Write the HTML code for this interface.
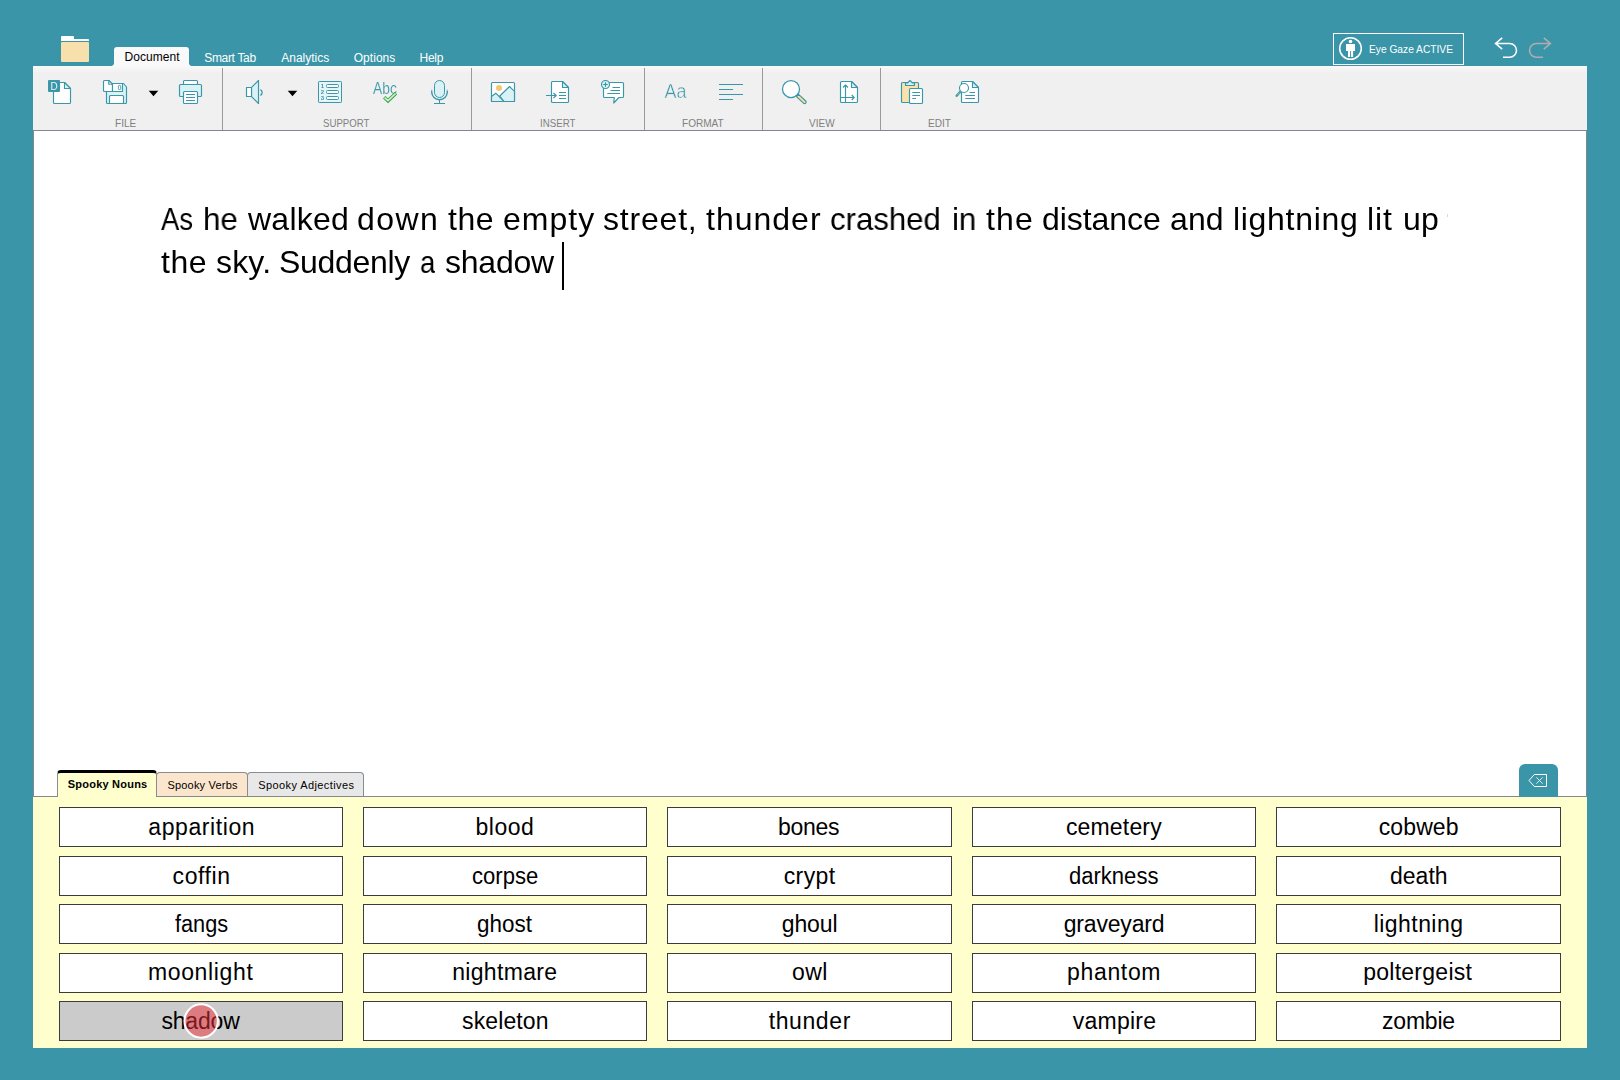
<!DOCTYPE html>
<html lang="en"><head><meta charset="utf-8"><title>DocsPlus - Spooky story</title>
<style>
*{box-sizing:border-box;margin:0;padding:0}
html,body{width:1620px;height:1080px;overflow:hidden;background:#3995a7;font-family:"Liberation Sans",sans-serif;}
.app{position:relative;width:1620px;height:1080px;background:#3995a7;}
.t{position:absolute;white-space:pre;transform-origin:0 0;}
.abs{position:absolute;}
.line .t{will-change:transform;}
.ribbon{position:absolute;left:33px;top:66px;width:1554px;height:64px;background:linear-gradient(#f9f9f9 0,#f0f0f0 7px,#f0f0f0 100%);}
.sep{position:absolute;top:68px;width:1px;height:62px;background:#9a9a9a;}
.doctab{position:absolute;left:114px;top:47px;width:75px;height:20px;background:linear-gradient(#fafafa,#f9f9f9);border-radius:3px 3px 0 0;}
.doctab:before,.doctab:after{content:"";position:absolute;bottom:1px;width:3px;height:3px;}
.doctab:before{left:-3px;background:radial-gradient(circle at 0 0,transparent 2.5px,#f9f9f9 3.5px);}
.doctab:after{right:-3px;background:radial-gradient(circle at 100% 0,transparent 2.5px,#f9f9f9 3.5px);}
.doc{position:absolute;left:33px;top:130px;width:1554px;height:667px;background:#fff;border:1px solid #828790;border-bottom:none;}
.caret{position:absolute;left:562px;top:242px;width:2px;height:48px;background:#000;}
.bank{position:absolute;left:33px;top:797px;width:1554px;height:251px;background:#ffffce;}
.bline{position:absolute;left:33px;top:796px;width:1554px;height:1px;background:#828790;}
.btab{position:absolute;border:1px solid #898c95;border-bottom:none;border-radius:4px 4px 0 0;}
.btab.a{left:57px;top:770px;width:100px;height:27px;background:#ffffce;border-top:3px solid #000;}
.btab.b{left:156px;top:772px;width:92px;height:24px;background:#fbe5cd;}
.btab.c{left:247px;top:772px;width:117px;height:24px;background:#e8e8e8;}
.wb{position:absolute;background:#fff;border:1px solid #3c3c3c;}
.wb.sel{background:#cbcbcb;}
.gaze{position:absolute;left:183.6px;top:1003.1px;width:35.2px;height:35.2px;border-radius:50%;background:rgba(238,45,55,.5);border:2px solid #fff;}
.bksp{position:absolute;left:1519px;top:764px;width:39px;height:33px;background:#3995a7;border-radius:6px 6px 0 0;}
.egbox{position:absolute;left:1333px;top:33px;width:131px;height:32px;border:1px solid #fff;}
</style></head>
<body><div class="app">
<div class="header">
<svg class="abs" style="left:0;top:0px;" width="1620" height="66" viewBox="0 0 1620 66" >
<g>
<path d="M61,37 a1,1 0 0 1 1,-1 h11 a1,1 0 0 1 1,1 v2 h14 a1,1 0 0 1 1,1 v1 h-28z" fill="#fff"/>
<path d="M61,43 a1,1 0 0 1 1,-1 h26 a1,1 0 0 1 1,1 v18 a1,1 0 0 1 -1,1 h-26 a1,1 0 0 1 -1,-1z" fill="#f8e0ad"/>
</g>
</svg>
<div class="doctab"></div>
<span class="t" style="left:124.4px;top:50.6px;font-size:12px;line-height:12px;letter-spacing:0.086px;color:#000;">Document</span>
<span class="t" style="left:204.2px;top:51.7px;font-size:12px;line-height:12px;letter-spacing:-0.312px;color:#fff;">Smart Tab</span>
<span class="t" style="left:281.3px;top:51.7px;font-size:12px;line-height:12px;letter-spacing:-0.013px;color:#fff;">Analytics</span>
<span class="t" style="left:353.7px;top:51.7px;font-size:12px;line-height:12px;letter-spacing:0.05px;color:#fff;">Options</span>
<span class="t" style="left:419.5px;top:51.7px;font-size:12px;line-height:12px;letter-spacing:-0.233px;color:#fff;">Help</span>
<div class="egbox"></div>
<svg class="abs" style="left:0;top:0px;" width="1620" height="66" viewBox="0 0 1620 66" >
<g fill="#fff">
<circle cx="1350.5" cy="48.5" r="10.8" fill="none" stroke="#fff" stroke-width="1.5"/>
<circle cx="1350.5" cy="41.5" r="1.8"/>
<rect x="1346" y="44" width="9" height="7"/>
<rect x="1348" y="50" width="2.1" height="7"/>
<rect x="1351" y="50" width="2.1" height="7"/>
</g>
</svg>
<span class="t" style="left:1369.4px;top:44.1px;font-size:11.5px;line-height:11.5px;color:#fff;transform:scaleX(0.8874);">Eye Gaze ACTIVE</span>
<svg class="abs" style="left:0;top:0px;" width="1620" height="66" viewBox="0 0 1620 66" >
<g fill="none" stroke-width="1.6" stroke-linejoin="miter">
<path d="M1502.2,37.8 L1495.6,43.5 L1502.2,49.2 M1495.8,43.5 H1509.6 A6.9,6.9 0 0 1 1509.6,57.3 H1503" stroke="#fff"/>
<path d="M1543.8,37.8 L1550.4,43.5 L1543.8,49.2 M1550.2,43.5 H1536.4 A6.9,6.9 0 0 0 1536.4,57.3 H1543" stroke="#b1adad"/>
</g>
</svg>
</div>
<div class="ribbon"></div>
<div class="sep" style="left:222px"></div>
<div class="sep" style="left:471px"></div>
<div class="sep" style="left:644px"></div>
<div class="sep" style="left:762px"></div>
<div class="sep" style="left:880px"></div>
<span class="t" style="left:115.3px;top:117.8px;font-size:11px;line-height:11px;color:#808080;transform:scaleX(0.9174);">FILE</span>
<span class="t" style="left:323.3px;top:117.8px;font-size:11px;line-height:11px;color:#808080;transform:scaleX(0.8755);">SUPPORT</span>
<span class="t" style="left:539.7px;top:117.8px;font-size:11px;line-height:11px;color:#808080;transform:scaleX(0.8825);">INSERT</span>
<span class="t" style="left:682.3px;top:117.8px;font-size:11px;line-height:11px;color:#808080;transform:scaleX(0.913);">FORMAT</span>
<span class="t" style="left:808.7px;top:117.8px;font-size:11px;line-height:11px;color:#808080;transform:scaleX(0.9107);">VIEW</span>
<span class="t" style="left:928.3px;top:117.8px;font-size:11px;line-height:11px;color:#808080;transform:scaleX(0.92);">EDIT</span>
<svg class="abs" style="left:370px;top:78px;will-change:transform" width="30" height="20" viewBox="370 78 30 20"><text x="373" y="94" font-family="Liberation Sans,sans-serif" font-size="16" fill="#3a97a9" stroke="#f0f0f0" stroke-width="0.12" textLength="23.8" lengthAdjust="spacingAndGlyphs">Abc</text></svg>
<svg class="abs" style="left:662px;top:80px;will-change:transform" width="28" height="22" viewBox="662 80 28 22"><text x="664.600" y="98" font-family="Liberation Sans,sans-serif" font-size="19.5" fill="#3a97a9" stroke="#f0f0f0" stroke-width="0.45" textLength="22" lengthAdjust="spacingAndGlyphs">Aa</text></svg>
<svg class="abs" style="left:0;top:0px;" width="1620" height="140" viewBox="0 0 1620 140" >
<g fill="#fff" stroke="#3a97a9" stroke-width="1.15" stroke-linejoin="round">
<path d="M54.5,82.5 H64.5 L70.5,88.5 V102.5 a1,1 0 0 1 -1,1 H54.5 a1,1 0 0 1 -1,-1 V83.5 a1,1 0 0 1 1,-1z" fill="#fff"/><path d="M64.5,82.5 V88.5 H70.5z" fill="#daf1f5"/>
<rect x="48" y="80" width="12" height="12" rx="1" fill="#3a97a9" stroke="none"/>
<text x="50.6" y="90" font-family="Liberation Sans,sans-serif" font-size="10" fill="#eaf6f8" stroke="none" textLength="7.2" lengthAdjust="spacingAndGlyphs">D</text>
</g>
<g fill="#fff" stroke="#3a97a9" stroke-width="1.15" stroke-linejoin="round">
<path d="M106.5,91 V102.5 a1,1 0 0 0 1,1 H125.500 a1,1 0 0 0 1,-1 V87 L123.500,83.5 H112" fill="#daf1f5"/>
<path d="M104.500,80.500 H109 L112.500,84 V91.500 H104.500 a1,1 0 0 1 -1,-1 V81.500 a1,1 0 0 1 1,-1z"/>
<path d="M108.800,80.500 V84.200 H112.500" fill="none"/>
<rect x="112.500" y="83.500" width="10" height="8"/>
<rect x="118.400" y="85.400" width="2.300" height="4.200" rx="0.8" stroke-width="0.9"/>
<path d="M109.500,103.500 V96.500 a1,1 0 0 1 1,-1 H122.500 a1,1 0 0 1 1,1 V103.500z"/>
</g>
<path d="M148.700,90.800 H158.300 L153.500,96.200z" fill="#000"/>
<g fill="#fff" stroke="#3a97a9" stroke-width="1.15" stroke-linejoin="round">
<rect x="179.500" y="84.500" width="22" height="12" rx="1" fill="#daf1f5"/>
<rect x="183.500" y="80.500" width="14" height="4" rx="1"/>
<rect x="183.500" y="91.500" width="14" height="12" rx="1"/>
<path d="M186,94.500 H195 M186,97.500 H195 M186,100.500 H195" fill="none"/>
</g>
<g fill="#fff" stroke="#3a97a9" stroke-width="1.15" stroke-linejoin="round">
<path d="M251.500,87.300 L258.500,80.500 V103.500 L251.500,96.700z" fill="#daf1f5"/>
<rect x="246.500" y="87.500" width="5" height="9"/>
<path d="M260.400,89.600 A3.300,3.300 0 0 1 260.400,95.400" fill="none" stroke-width="1.3"/>
</g>
<path d="M287.700,90.800 H297.300 L292.500,96.200z" fill="#000"/>
<g fill="#fff" stroke="#3a97a9" stroke-width="1">
<rect x="318.500" y="81.500" width="23" height="21" rx="0.7" fill="#e6f6f8"/>
<rect x="326.500" y="84.500" width="12" height="3" rx="1"/>
<rect x="326.500" y="90.500" width="12" height="3" rx="1"/>
<rect x="326.500" y="96.500" width="12" height="3" rx="1"/>
<g font-family="Liberation Sans,sans-serif" font-size="6" font-weight="700" fill="#3a97a9" stroke="none"><text x="320.700" y="88">1</text><text x="320.700" y="94">2</text><text x="320.700" y="100">3</text></g>
</g>
<g>
<path d="M384.200,97.300 L388,100.800 L396,93.200" fill="none" stroke="#31a23a" stroke-width="3.400" stroke-linejoin="miter"/>
<path d="M384.600,97.600 L388,100.700 L395.600,93.500" fill="none" stroke="#d2f2d4" stroke-width="1.700" stroke-linejoin="miter"/>
</g>
<g fill="none" stroke="#3a97a9" stroke-width="1">
<rect x="434.500" y="80.500" width="10" height="17" rx="5" fill="#daf1f5"/>
<path d="M431.700,91 V92 A7.800,7.800 0 0 0 447.300,92 V91" stroke-width="1.4"/><path d="M431.700,89.500 V91 M447.300,89.500 V91" stroke-width="1.4" stroke-opacity="0.45"/>
<path d="M439.500,100 V103.500 M434,103.500 H445"/>
</g>
<g fill="#fff" stroke="#3a97a9" stroke-width="1.15" stroke-linejoin="round">
<rect x="491.500" y="82.500" width="23" height="19" rx="1"/>
<path d="M499.800,96 L509.500,86.500 L514.500,91.300 V101.500 H504z" fill="#daf1f5"/>
<path d="M491.500,96.500 L495.800,93.200 L504,101.500 H491.500z" fill="#daf1f5"/>
<circle cx="499" cy="88" r="3" fill="#f0c872" stroke="none"/>
</g>
<g fill="#fff" stroke="#3a97a9" stroke-width="1.15" stroke-linejoin="round">
<path d="M552.5,81.5 H562.5 L568.5,87.5 V101.5 a1,1 0 0 1 -1,1 H552.5 a1,1 0 0 1 -1,-1 V82.5 a1,1 0 0 1 1,-1z" fill="#fff"/><path d="M562.5,81.5 V87.5 H568.5z" fill="#daf1f5"/>
<path d="M559,92.500 H566 M559,95.500 H566 M559,98.500 H566 M546,95.500 H556 M553.500,93 L556.200,95.500 L553.500,98" fill="none"/>
</g>
<g fill="#fff" stroke="#3a97a9" stroke-width="1.15" stroke-linejoin="round">
<path d="M604.500,82.500 H622.500 a1,1 0 0 1 1,1 V96.500 a1,1 0 0 1 -1,1 H619 L613.700,103 L614.300,97.500 H604.500 a1,1 0 0 1 -1,-1 V83.500 a1,1 0 0 1 1,-1z"/>
<path d="M612.500,87.500 H620 M610.500,90.500 H620 M607.300,93.500 H620" fill="none"/>
<circle cx="605.500" cy="84.500" r="4" fill="#daf1f5"/>
<path d="M603.200,84.500 H607.800 M605.500,82.200 V86.800" fill="none"/>
</g>
<path d="M719,84.500 H743 M719,89.500 H733 M719,94.500 H743 M719,99.500 H733" fill="none" stroke="#3a97a9" stroke-width="1"/>
<g stroke="#3a97a9" stroke-width="1.15" stroke-linejoin="round">
<path d="M796.400,96.600 L798.600,94.400 L805.700,101 a1.500,1.500 0 0 1 -2.200,2.200z" fill="#fce08c"/>
<circle cx="791" cy="89" r="8.500" fill="#fff" stroke-width="1.25"/>
</g>
<g fill="#fff" stroke="#3a97a9" stroke-width="1.15" stroke-linejoin="round">
<path d="M841.5,81.5 H851.5 L857.5,87.5 V101.5 a1,1 0 0 1 -1,1 H841.5 a1,1 0 0 1 -1,-1 V82.5 a1,1 0 0 1 1,-1z" fill="#fff"/><path d="M851.5,81.5 V87.5 H857.5z" fill="#daf1f5"/>
<path d="M845.500,103 V85 M843,87.500 L845.500,85 L848,87.500 M840.500,97.500 H854 M851.700,95 L854.200,97.500 L851.700,100" fill="none"/>
</g>
<g fill="#fff" stroke="#3a97a9" stroke-width="1.15" stroke-linejoin="round">
<rect x="901.500" y="82.500" width="17" height="20" rx="1" fill="#fbe2ad"/>
<path d="M905.500,85.500 V83 H907.500 L910,80.500 L912.500,83 H914.500 V85.500z" fill="#daf1f5"/>
<rect x="909.500" y="88.500" width="13" height="15" rx="1"/>
<path d="M912.300,92.500 H920 M912.300,95.500 H920 M912.300,98.500 H916" fill="none"/>
</g>
<g fill="#fff" stroke="#3a97a9" stroke-width="1.15" stroke-linejoin="round">
<path d="M962.5,81.5 H972.5 L978.5,87.5 V101.5 a1,1 0 0 1 -1,1 H962.5 a1,1 0 0 1 -1,-1 V82.5 a1,1 0 0 1 1,-1z" fill="#fff"/><path d="M972.5,81.5 V87.5 H978.5z" fill="#daf1f5"/>
<path d="M969.500,92.500 H975 M965.300,95.500 H975 M965.300,98.500 H975" fill="none"/>
<path d="M960.700,91.300 L956.700,95.800" stroke-width="2.400" stroke-linecap="round"/>
<path d="M960.400,91.700 L957,95.500" stroke="#f2dc8a" stroke-width="0.900" stroke-dasharray="1 0.800"/>
<circle cx="964" cy="88" r="4.500"/>
</g>
</svg>
<div class="doc"></div>
<p class="line"><span class="t" style="left:160.74px;top:203px;font-size:32px;line-height:32px;color:#000;transform:scaleX(0.86);">As</span> <span class="t" style="left:202.72px;top:203px;font-size:32px;line-height:32px;color:#000;transform:scaleX(0.9794);">he</span> <span class="t" style="left:248.3px;top:203px;font-size:32px;line-height:32px;letter-spacing:0.24px;color:#000;">walked</span> <span class="t" style="left:357.3px;top:203px;font-size:32px;line-height:32px;letter-spacing:1.467px;color:#000;">down</span> <span class="t" style="left:448px;top:203px;font-size:32px;line-height:32px;letter-spacing:0.5px;color:#000;">the</span> <span class="t" style="left:503.2px;top:203px;font-size:32px;line-height:32px;letter-spacing:1.0px;color:#000;">empty</span> <span class="t" style="left:603.2px;top:203px;font-size:32px;line-height:32px;letter-spacing:0.8px;color:#000;">street,</span> <span class="t" style="left:705.8px;top:203px;font-size:32px;line-height:32px;letter-spacing:1.0px;color:#000;">thunder</span> <span class="t" style="left:830.33px;top:203px;font-size:32px;line-height:32px;color:#000;transform:scaleX(0.9732);">crashed</span> <span class="t" style="left:951.82px;top:203px;font-size:32px;line-height:32px;color:#000;transform:scaleX(0.9783);">in</span> <span class="t" style="left:985.5px;top:203px;font-size:32px;line-height:32px;letter-spacing:1.1px;color:#000;">the</span> <span class="t" style="left:1042.3px;top:203px;font-size:32px;line-height:32px;letter-spacing:-0.071px;color:#000;">distance</span> <span class="t" style="left:1170.3px;top:203px;font-size:32px;line-height:32px;letter-spacing:0.1px;color:#000;">and</span> <span class="t" style="left:1233.2px;top:203px;font-size:32px;line-height:32px;letter-spacing:0.688px;color:#000;">lightning</span> <span class="t" style="left:1367.3px;top:203px;font-size:32px;line-height:32px;letter-spacing:0.85px;color:#000;">lit</span> <span class="t" style="left:1403.2px;top:203px;font-size:32px;line-height:32px;letter-spacing:0.1px;color:#000;">up</span></p>
<p class="line"><span class="t" style="left:160.8px;top:246px;font-size:32px;line-height:32px;letter-spacing:0.5px;color:#000;">the</span> <span class="t" style="left:216.2px;top:246px;font-size:32px;line-height:32px;letter-spacing:0.167px;color:#000;">sky.</span> <span class="t" style="left:279px;top:246px;font-size:32px;line-height:32px;letter-spacing:-0.314px;color:#000;">Suddenly</span> <span class="t" style="left:419.83px;top:246px;font-size:32px;line-height:32px;color:#000;transform:scaleX(0.86);">a</span> <span class="t" style="left:444.8px;top:246px;font-size:32px;line-height:32px;letter-spacing:-0.22px;color:#000;">shadow</span></p>
<div class="caret"></div>
<div class="abs" style="left:1447px;top:214px;width:1px;height:3px;background:#d8d8d8"></div>
<div class="bline"></div>
<div class="bank"></div>
<div class="btab b"></div><div class="btab c"></div><div class="btab a"></div>
<span class="t" style="left:67.8px;top:778.8px;font-size:11px;line-height:11px;letter-spacing:0.218px;color:#000;font-weight:700;">Spooky Nouns</span>
<span class="t" style="left:167.4px;top:780.1px;font-size:11px;line-height:11px;letter-spacing:0.2px;color:#000;">Spooky Verbs</span>
<span class="t" style="left:258.2px;top:780.1px;font-size:11px;line-height:11px;letter-spacing:0.406px;color:#000;">Spooky Adjectives</span>
<div class="bksp"></div>
<svg class="abs" style="left:0;top:760px;" width="1620" height="40" viewBox="0 760 1620 40" >
<g fill="none" stroke="#fff">
<path d="M1534.3,774.5 H1546.5 V786.5 H1534.3 L1529,780.5 Z" stroke-width="1" stroke-linejoin="round"/>
<path d="M1536.3,777.3 L1542.7,783.7 M1542.7,777.3 L1536.3,783.7" stroke-width="0.8"/>
</g>
</svg>
<div class="wb" style="left:59px;top:807px;width:284px;height:40px"></div><span class="t" style="left:148.35px;top:816px;font-size:23px;line-height:23px;letter-spacing:0.589px;color:#000;">apparition</span>
<div class="wb" style="left:363px;top:807px;width:284px;height:40px"></div><span class="t" style="left:475.45px;top:816px;font-size:23px;line-height:23px;letter-spacing:0.525px;color:#000;">blood</span>
<div class="wb" style="left:667px;top:807px;width:285px;height:40px"></div><span class="t" style="left:778.05px;top:816px;font-size:23px;line-height:23px;letter-spacing:-0.275px;color:#000;">bones</span>
<div class="wb" style="left:972px;top:807px;width:284px;height:40px"></div><span class="t" style="left:1065.9px;top:816px;font-size:23px;line-height:23px;letter-spacing:0.171px;color:#000;">cemetery</span>
<div class="wb" style="left:1276px;top:807px;width:285px;height:40px"></div><span class="t" style="left:1378.7px;top:816px;font-size:23px;line-height:23px;letter-spacing:0.12px;color:#000;">cobweb</span>
<div class="wb" style="left:59px;top:856px;width:284px;height:40px"></div><span class="t" style="left:172.55px;top:865px;font-size:23px;line-height:23px;letter-spacing:0.58px;color:#000;">coffin</span>
<div class="wb" style="left:363px;top:856px;width:284px;height:40px"></div><span class="t" style="left:471.9px;top:865px;font-size:23px;line-height:23px;color:#000;transform:scaleX(0.9594);">corpse</span>
<div class="wb" style="left:667px;top:856px;width:285px;height:40px"></div><span class="t" style="left:783.7px;top:865px;font-size:23px;line-height:23px;letter-spacing:0.4px;color:#000;">crypt</span>
<div class="wb" style="left:972px;top:856px;width:284px;height:40px"></div><span class="t" style="left:1069.45px;top:865px;font-size:23px;line-height:23px;color:#000;transform:scaleX(0.9581);">darkness</span>
<div class="wb" style="left:1276px;top:856px;width:285px;height:40px"></div><span class="t" style="left:1389.95px;top:865px;font-size:23px;line-height:23px;letter-spacing:0.025px;color:#000;">death</span>
<div class="wb" style="left:59px;top:904px;width:284px;height:40px"></div><span class="t" style="left:174.55px;top:913px;font-size:23px;line-height:23px;color:#000;transform:scaleX(0.9446);">fangs</span>
<div class="wb" style="left:363px;top:904px;width:284px;height:40px"></div><span class="t" style="left:477.2px;top:913px;font-size:23px;line-height:23px;color:#000;transform:scaleX(0.9754);">ghost</span>
<div class="wb" style="left:667px;top:904px;width:285px;height:40px"></div><span class="t" style="left:781.7px;top:913px;font-size:23px;line-height:23px;letter-spacing:-0.1px;color:#000;">ghoul</span>
<div class="wb" style="left:972px;top:904px;width:284px;height:40px"></div><span class="t" style="left:1063.65px;top:913px;font-size:23px;line-height:23px;letter-spacing:-0.163px;color:#000;">graveyard</span>
<div class="wb" style="left:1276px;top:904px;width:285px;height:40px"></div><span class="t" style="left:1373.7px;top:913px;font-size:23px;line-height:23px;letter-spacing:0.45px;color:#000;">lightning</span>
<div class="wb" style="left:59px;top:953px;width:284px;height:40px"></div><span class="t" style="left:147.9px;top:961px;font-size:23px;line-height:23px;letter-spacing:0.65px;color:#000;">moonlight</span>
<div class="wb" style="left:363px;top:953px;width:284px;height:40px"></div><span class="t" style="left:452.2px;top:961px;font-size:23px;line-height:23px;letter-spacing:0.325px;color:#000;">nightmare</span>
<div class="wb" style="left:667px;top:953px;width:285px;height:40px"></div><span class="t" style="left:792.05px;top:961px;font-size:23px;line-height:23px;letter-spacing:0.45px;color:#000;">owl</span>
<div class="wb" style="left:972px;top:953px;width:284px;height:40px"></div><span class="t" style="left:1067.0px;top:961px;font-size:23px;line-height:23px;letter-spacing:0.667px;color:#000;">phantom</span>
<div class="wb" style="left:1276px;top:953px;width:285px;height:40px"></div><span class="t" style="left:1363.15px;top:961px;font-size:23px;line-height:23px;letter-spacing:0.27px;color:#000;">poltergeist</span>
<div class="wb sel" style="left:59px;top:1001px;width:284px;height:40px"></div><span class="t" style="left:161.45px;top:1010px;font-size:23px;line-height:23px;letter-spacing:-0.18px;color:#000;">shadow</span>
<div class="wb" style="left:363px;top:1001px;width:284px;height:40px"></div><span class="t" style="left:462.1px;top:1010px;font-size:23px;line-height:23px;letter-spacing:0.114px;color:#000;">skeleton</span>
<div class="wb" style="left:667px;top:1001px;width:285px;height:40px"></div><span class="t" style="left:768.7px;top:1010px;font-size:23px;line-height:23px;letter-spacing:0.6px;color:#000;">thunder</span>
<div class="wb" style="left:972px;top:1001px;width:284px;height:40px"></div><span class="t" style="left:1072.8px;top:1010px;font-size:23px;line-height:23px;letter-spacing:0.233px;color:#000;">vampire</span>
<div class="wb" style="left:1276px;top:1001px;width:285px;height:40px"></div><span class="t" style="left:1382.05px;top:1010px;font-size:23px;line-height:23px;letter-spacing:-0.22px;color:#000;">zombie</span>
<svg class="abs" style="left:180px;top:1000px" width="42" height="42" viewBox="180 1000 42 42"><circle cx="201.15" cy="1021" r="16.7" fill="rgba(238,45,55,.5)" stroke="#fff" stroke-width="2"/></svg>
</div></body></html>
